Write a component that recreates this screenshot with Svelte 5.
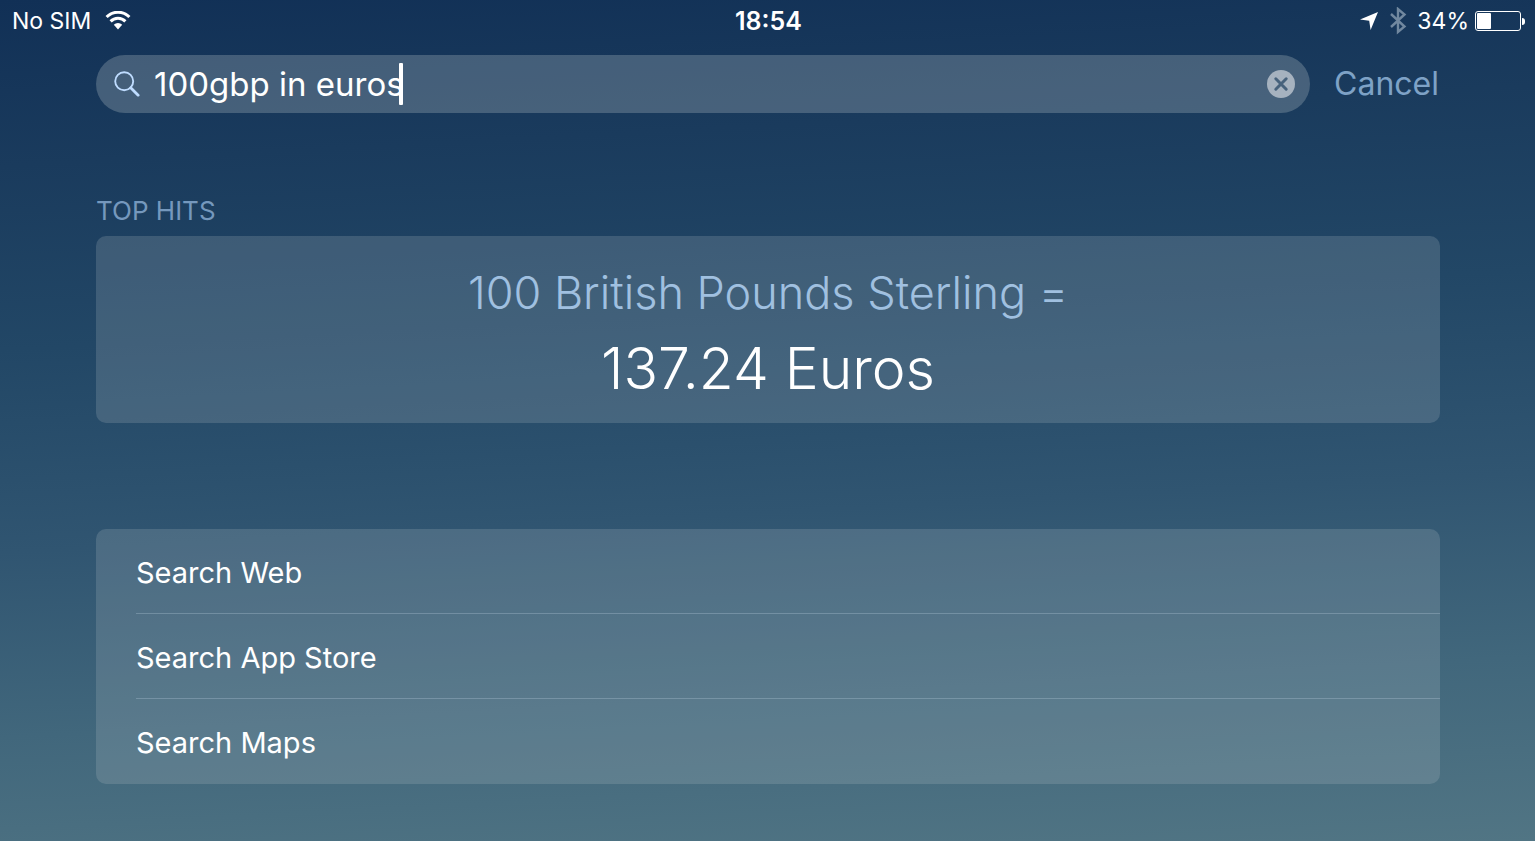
<script>
  let query = $state("100gbp in euros");
  let field;

  const battery = 34;
  const hit = {
    label: "100 British Pounds Sterling =",
    value: "137.24 Euros",
  };
  const actions = ["Search Web", "Search App Store", "Search Maps"];

  function clear() {
    query = "";
    field.focus();
  }
</script>

<div class="screen">
  <header class="status">
    <div class="status-side">
      <span>No SIM</span>
      <svg class="wifi" viewBox="0 0 26 20" aria-hidden="true">
        <path d="M1.6 6A16 16 0 0 1 24.4 6" />
        <path d="M5.6 10.4A10.4 10.4 0 0 1 20.4 10.4" />
        <path class="dot" d="M8.8 13.8A6 6 0 0 1 17.2 13.8L13 18.4Z" />
      </svg>
    </div>
    <time>18:54</time>
    <div class="status-side right">
      <svg class="location" viewBox="0 0 20 20" aria-hidden="true">
        <path d="M19 1L11.6 19L10.2 9.8L1 8.6Z" />
      </svg>
      <svg class="bluetooth" viewBox="0 0 18 28" aria-hidden="true">
        <path d="M2 7L15.5 19.5L9 25V2L15.5 7.5L2 20" />
      </svg>
      <span>{battery}%</span>
      <div class="battery">
        <div class="battery-body">
          <div class="battery-level" style={`width: ${battery}%`}></div>
        </div>
        <div class="battery-cap"></div>
      </div>
    </div>
  </header>

  <form class="search" onsubmit={(e) => e.preventDefault()}>
    <div class="search-box">
      <label class="search-field">
        <svg class="glass" viewBox="0 0 28 28" aria-hidden="true">
          <circle cx="11" cy="11" r="9.7" />
          <path d="M18 18L26 26" class="handle" />
        </svg>
        <input type="text" aria-label="Search" spellcheck="false" bind:value={query} bind:this={field} />
        <span class="caret"></span>
      </label>
      <button type="button" class="clear" aria-label="Clear text" onclick={clear}>
        <svg viewBox="0 0 28 28" aria-hidden="true">
          <circle cx="14" cy="14" r="14" />
          <path d="M8.8 8.8L19.2 19.2M19.2 8.8L8.8 19.2" />
        </svg>
      </button>
    </div>
    <button type="button" class="cancel">Cancel</button>
  </form>

  <main>
    <h2>TOP HITS</h2>
    <section class="panel hit">
      <p class="hit-label">{hit.label}</p>
      <p class="hit-value">{hit.value}</p>
    </section>

    <ul class="panel actions">
      {#each actions as action (action)}
        <li><button type="button">{action}</button></li>
      {/each}
    </ul>
  </main>
</div>

<style>
  :global(body) {
    background: #4f7384;
  }

  .screen {
    box-sizing: border-box;
    min-height: 100vh;
    font-family: Inter, "Liberation Sans", sans-serif;
    color: #fff;
    background: linear-gradient(177deg, #113056 0%, #1a3b5d 18%, #224766 38%, #305571 60%, #41677c 80%, #517584 100%);
  }

  button,
  input {
    padding: 0;
    border: 0;
    background: none;
    font: inherit;
    color: inherit;
  }

  button {
    cursor: pointer;
  }

  /* status bar */
  .status {
    display: grid;
    grid-template-columns: 1fr auto 1fr;
    align-items: center;
    height: 42px;
    padding: 0 10px 0 12px;
    font-size: 23px;
    line-height: 42px;
  }

  .status time {
    font-size: 25px;
    font-weight: 600;
  }

  .status-side {
    display: flex;
    align-items: center;
    gap: 14px;
  }

  .status-side.right {
    justify-content: flex-end;
    gap: 6px;
  }

  .wifi {
    width: 26px;
    height: 20px;
    fill: none;
    stroke: #fff;
    stroke-width: 3;
  }

  .wifi .dot {
    fill: #fff;
    stroke: none;
  }

  .location {
    width: 20px;
    height: 20px;
    fill: #fff;
    margin-right: 4px;
  }

  .bluetooth {
    width: 18px;
    height: 28px;
    margin-right: 4px;
    fill: none;
    stroke: #71889f;
    stroke-width: 2.4;
  }

  .battery {
    display: flex;
    align-items: center;
    gap: 1px;
  }

  .battery-body {
    box-sizing: border-box;
    width: 46px;
    height: 20px;
    padding: 1px;
    border: 1px solid #fff;
    border-radius: 3px;
  }

  .battery-level {
    height: 100%;
    border-radius: 1px;
    background: #fff;
  }

  .battery-cap {
    width: 3px;
    height: 7px;
    border-radius: 0 3px 3px 0;
    background: #fff;
  }

  /* search bar */
  .search {
    display: flex;
    align-items: center;
    gap: 24px;
    padding: 13px 96px 0;
  }

  .search-box {
    flex: 1;
    display: flex;
    align-items: center;
    height: 58px;
    padding: 0 15px 0 18px;
    border-radius: 29px;
    background: rgba(190, 200, 205, 0.28);
  }

  .search-field {
    flex: 1;
    display: flex;
    align-items: center;
    font-size: 33px;
    line-height: 42px;
    cursor: text;
  }

  .search-field input {
    field-sizing: content;
    height: 42px;
    outline: none;
    caret-color: transparent;
  }

  .glass {
    width: 26px;
    height: 26px;
    margin-right: 14px;
    fill: none;
    stroke: #bfdcff;
    stroke-width: 2;
  }

  .glass .handle {
    stroke-width: 3;
    stroke-linecap: round;
  }

  .caret {
    width: 4px;
    height: 42px;
    margin-left: -5px;
    border-radius: 1px;
    background: #fff;
  }

  .clear,
  .clear svg {
    display: block;
    width: 28px;
    height: 28px;
  }

  .clear circle {
    fill: #a6b2bf;
  }

  .clear path {
    stroke: #47627c;
    stroke-width: 3;
    stroke-linecap: round;
  }

  .cancel {
    font-size: 32px;
    line-height: 44px;
    color: #7ea2c6;
  }

  /* results */
  main {
    padding: 82px 95px 57px 96px;
  }

  h2 {
    margin: 0 0 9px;
    font-size: 26px;
    font-weight: 400;
    line-height: 32px;
    color: #7598bd;
  }

  .panel {
    border-radius: 10px;
    background: rgba(190, 200, 205, 0.2);
  }

  .hit {
    padding: 24px 0 12px;
    text-align: center;
    font-weight: 300;
  }

  .hit p {
    margin: 0;
  }

  .hit-label {
    font-size: 45px;
    line-height: 66px;
    color: #a0c0e0;
  }

  .hit-value {
    font-size: 57px;
    line-height: 85px;
  }

  .actions {
    margin: 106px 0 0;
    padding: 0 0 1px 40px;
    list-style: none;
  }

  .actions li + li {
    border-top: 1px solid rgba(190, 210, 225, 0.3);
  }

  .actions button {
    width: 100%;
    padding: 24px 0 20px;
    font-size: 29px;
    line-height: 40px;
    text-align: left;
  }
</style>
